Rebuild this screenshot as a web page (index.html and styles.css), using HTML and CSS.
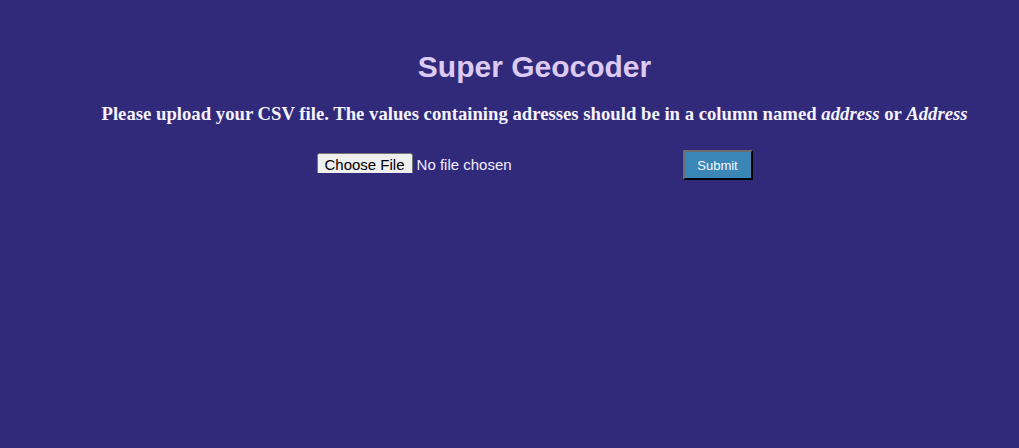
FILE: index.html
```html
<!DOCTYPE html>
<html>
<head>
<meta charset="utf-8">
<title>Super Geocoder</title>
<link rel="stylesheet" href="styles.css">
</head>
<body>
<div class="container">
  <h1 class="title">Super Geocoder</h1>
  <h3 class="subtitle">Please upload your CSV file. The values containing adresses should be in a column named <em>address</em> or <em>Address</em></h3>
  <form class="upload">
    <input class="file" type="file" name="file">
    <button class="submit" type="submit">Submit</button>
  </form>
</div>
</body>
</html>
```

FILE: styles.css
```css
html, body {
  margin: 0;
  padding: 0;
  background: #312a7b;
  height: 100%;
}
.container {
  padding: 50px 0 0 50px;
  text-align: center;
}
.title {
  margin: 0;
  font-family: "Liberation Sans", Arial, sans-serif;
  font-weight: bold;
  font-size: 30px;
  line-height: 34px;
  color: #dccaf2;
}
.subtitle {
  margin: 19px 0 0;
  font-family: "Liberation Serif", "Times New Roman", serif;
  font-weight: bold;
  font-size: 18.72px;
  line-height: 22px;
  color: #f6f2ff;
}
.upload {
  margin-top: 25px;
  display: flex;
  justify-content: center;
  align-items: flex-start;
  gap: 0;
}
.file {
  width: 366px;
  height: 20px;
  margin-top: 3px;
  overflow: hidden;
  font-family: "Liberation Sans", Arial, sans-serif;
  font-size: 15px;
  color: #f0ecff;
}
.submit {
  width: 70px;
  height: 30px;
  background: #3a86b7;
  color: #f4f8ff;
  border: 2px outset #6e6e6e;
  border-right-color: #222;
  border-bottom-color: #222;
  font-family: "Liberation Sans", Arial, sans-serif;
  font-size: 13px;
  padding: 0;
}
```
